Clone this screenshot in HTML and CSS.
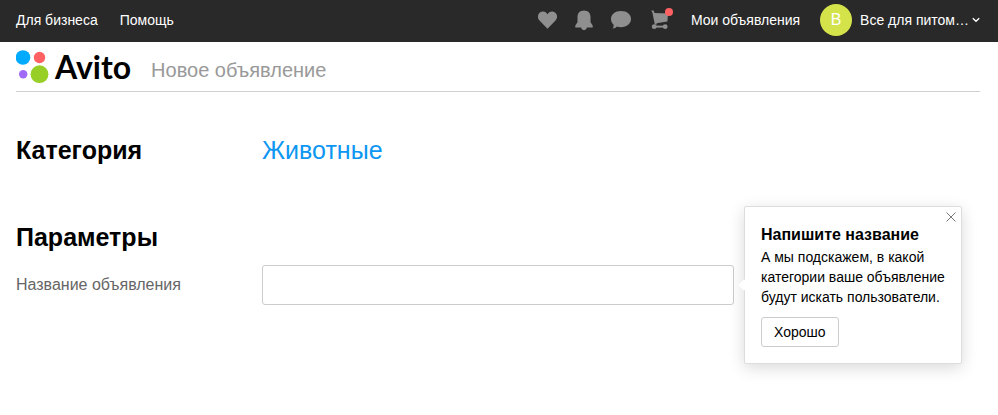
FILE: index.html
```html
<!doctype html>
<html lang="ru">
<head>
  <meta charset="utf-8">
  <meta name="viewport" content="width=device-width, initial-scale=1">
  <title>Новое объявление</title>
  <link rel="stylesheet" href="styles.css">
</head>
<body>

  <nav class="topbar">
    <div class="topbar-links">
      <a href="#">Для бизнеса</a>
      <a href="#">Помощь</a>
    </div>
    <div class="topbar-user">
      <div class="topbar-icons">
        <a href="#" aria-label="Избранное">
          <svg width="20" height="20" viewBox="0 0 20 20"><path d="M10.500 18.800 2.500 10.600C-.5 7.500 1 1.900 5.500 1.500 8 1.300 9.500 2.800 10.500 4.200c1-1.400 2.500-2.900 5-2.700 4.500.4 6 6 3 9.100Z"/></svg>
        </a>
        <a href="#" aria-label="Уведомления">
          <svg width="20" height="20" viewBox="0 0 20 20"><path d="M10 .5c4.200 0 6.500 2.800 6.500 6.500v5.200l2.200 3.200v2.100h-5.800c-.3 1.500-1.400 2.700-2.900 2.700s-2.600-1.200-2.900-2.700H1.300v-2.100l2.200-3.200V7C3.500 3.300 5.800.5 10 .5Z"/></svg>
        </a>
        <a href="#" aria-label="Сообщения">
          <svg width="20" height="20" viewBox="0 0 20 20"><path d="M10 1c5.900 0 10 3.400 10 8s-4.100 8.200-10 8.200c-1.500 0-2.800-.2-4-.6-1.100 1.200-2.600 1.900-4.400 2.100.9-1.300 1.200-2.600 1-4C1 13.200 0 11.300 0 9c0-4.600 4.100-8 10-8Z"/></svg>
        </a>
        <a href="#" class="cart" aria-label="Корзина">
          <svg width="20" height="20" viewBox="0 0 20 20">
            <path d="M.3.200 2.800.8 3.500 3l13.500.4-.6 8.200-10.900 1.700.3 1.200h-2L1.500 3Z"/>
            <path d="M3.500 15.600h10.500v2H3.500Z"/>
            <circle cx="3.200" cy="16.700" r="2.400"/>
            <circle cx="14.200" cy="16.700" r="2.400"/>
          </svg>
          <span class="cart-dot"></span>
        </a>
      </div>
      <a href="#">Мои объявления</a>
      <a href="#" class="profile">
        <span class="avatar">В</span>
        <span class="profile-name">Все для питом…</span>
        <svg class="chevron" width="8" height="6" viewBox="0 0 8 6"><path d="m.8 1.200 3.200 3 3.200-3"/></svg>
      </a>
    </div>
  </nav>

  <header class="header">
    <a href="#" class="logo">
      <svg width="33" height="34" viewBox="0 0 33 34">
        <circle cx="7" cy="7.500" r="7.300" fill="#00aaff"/>
        <circle cx="23.500" cy="7.500" r="5.700" fill="#ff6163"/>
        <circle cx="7.200" cy="24.200" r="4.200" fill="#a169f7"/>
        <circle cx="23.500" cy="24.200" r="8.900" fill="#97cf26"/>
      </svg>
      <span class="logo-text">Avito</span>
    </a>
    <span class="header-title">Новое объявление</span>
  </header>

  <main class="content">
    <section class="row category">
      <h2>Категория</h2>
      <a href="#" class="category-link">Животные</a>
    </section>

    <form class="params">
      <h2>Параметры</h2>
      <div class="row">
        <label for="title">Название объявления</label>
        <div class="field">
          <input type="text" id="title" name="title">
          <div class="hint">
            <button type="button" class="hint-close" aria-label="Закрыть">
              <svg width="10" height="10" viewBox="0 0 10 10"><path d="m.5.5 9 9m0-9-9 9"/></svg>
            </button>
            <h3>Напишите название</h3>
            <p>А мы подскажем, в какой категории ваше объявление будут искать пользователи.</p>
            <button type="button" class="hint-ok">Хорошо</button>
          </div>
        </div>
      </div>
    </form>
  </main>

</body>
</html>
```
FILE: styles.css
```css
body {
  margin: 0;
  background: #fff;
  color: #000;
  font-family: "Liberation Sans", Arial, sans-serif;
  font-size: 14px;
  line-height: 20px;
}
a {
  color: inherit;
  text-decoration: none;
}
h2, h3, p {
  margin: 0;
}
.topbar {
  display: flex;
  justify-content: space-between;
  align-items: center;
  padding: 4px 18px 6px 16px;
  background: #292929;
  color: #fff;
  line-height: 16px;
}
.topbar-links {
  display: flex;
  gap: 22px;
}
.topbar-user {
  display: flex;
  align-items: center;
  gap: 20px;
}
.topbar-icons {
  display: flex;
  gap: 17px;
}
.topbar-icons a {
  position: relative;
  height: 20px;
}
.topbar-icons svg {
  display: block;
  fill: #8f8f8f;
}
.topbar-icons .cart {
  margin-left: 3px;
}
.cart-dot {
  position: absolute;
  top: -2px;
  right: -2px;
  width: 8px;
  height: 8px;
  border-radius: 50%;
  background: #ff6163;
}
.profile {
  display: flex;
  align-items: center;
}
.avatar {
  width: 32px;
  height: 32px;
  margin-right: 8px;
  border-radius: 50%;
  background: #d4e34a;
  font-size: 16px;
  line-height: 32px;
  text-align: center;
}
.chevron {
  margin-left: 3px;
  fill: none;
  stroke: #fff;
  stroke-width: 1.4;
}
.header {
  display: flex;
  align-items: center;
  gap: 20px;
  height: 49px;
  margin: 0 18px 0 16px;
  border-bottom: 1px solid #d0d0d0;
}
.logo {
  display: flex;
  align-items: center;
  gap: 6px;
}
.logo-text {
  font-family: Lato, sans-serif;
  font-size: 32px;
  font-weight: 700;
  line-height: 32px;
}
.header-title {
  padding-top: 6px;
  color: #999;
  font-size: 20px;
}
.content {
  padding: 42px 18px 100px 16px;
}
h2 {
  font-size: 25px;
  line-height: 32px;
}
.row {
  display: grid;
  grid-template-columns: 246px minmax(0, 472px);
  align-items: center;
}
.category-link {
  color: #0d96f2;
  font-size: 25px;
  line-height: 32px;
}
.params {
  margin-top: 55px;
}
.params .row {
  margin-top: 12px;
}
label {
  color: #666;
  font-size: 16px;
}
.field {
  position: relative;
}
.field input {
  display: block;
  box-sizing: border-box;
  width: 100%;
  height: 40px;
  padding: 0 12px;
  border: 1px solid #ccc;
  border-radius: 3px;
  font: inherit;
}
.hint {
  position: absolute;
  top: 50%;
  left: 100%;
  box-sizing: border-box;
  width: 218px;
  margin-left: 10px;
  padding: 16px;
  transform: translateY(-50%);
  border: 1px solid #ddd;
  border-radius: 2px;
  background: #fff;
  box-shadow: 0 4px 16px rgba(0, 0, 0, 0.15);
}
.hint::before {
  content: "";
  position: absolute;
  top: 50%;
  left: -5px;
  width: 8px;
  height: 8px;
  margin-top: -4px;
  background: #fff;
  transform: rotate(45deg);
}
.hint h3 {
  font-size: 16px;
  line-height: 24px;
}
.hint-close {
  position: absolute;
  top: 5px;
  right: 5px;
  padding: 0;
  border: 0;
  background: none;
  cursor: pointer;
}
.hint-close svg {
  display: block;
  stroke: #777;
}
.hint-ok {
  display: block;
  height: 30px;
  margin-top: 10px;
  padding: 0 12px;
  border: 1px solid #ccc;
  border-radius: 3px;
  background: #fff;
  color: #000;
  font: inherit;
  cursor: pointer;
}
```
